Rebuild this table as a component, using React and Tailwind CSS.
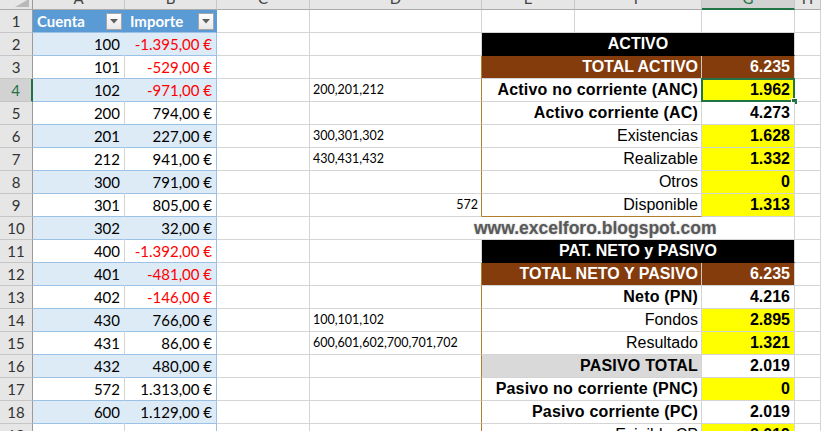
import React from 'react';

const calibri = "font-['Lato','Carlito','Liberation_Sans',sans-serif]";

const tableRows = [
  ['100', '-1.395,00 €', true],
  ['101', '-529,00 €', true],
  ['102', '-971,00 €', true],
  ['200', '794,00 €'],
  ['201', '227,00 €'],
  ['212', '941,00 €'],
  ['300', '791,00 €'],
  ['301', '805,00 €'],
  ['302', '32,00 €'],
  ['400', '-1.392,00 €', true],
  ['401', '-481,00 €', true],
  ['402', '-146,00 €', true],
  ['430', '766,00 €'],
  ['431', '86,00 €'],
  ['432', '480,00 €'],
  ['572', '1.313,00 €'],
  ['600', '1.129,00 €'],
  ['', ''],
];

const notes = {
  4: '200,201,212',
  6: '300,301,302',
  7: '430,431,432',
  14: '100,101,102',
  15: '600,601,602,700,701,702',
};

// bloque del balance (columnas E:G)
const balance = {
  2: { title: 'ACTIVO' },
  3: { total: true, label: 'TOTAL ACTIVO', value: '6.235' },
  4: { label: 'Activo no corriente (ANC)', bold: true, value: '1.962', yellow: true, selected: true },
  5: { label: 'Activo corriente (AC)', bold: true, value: '4.273' },
  6: { label: 'Existencias', value: '1.628', yellow: true },
  7: { label: 'Realizable', value: '1.332', yellow: true },
  8: { label: 'Otros', value: '0', yellow: true },
  9: { label: 'Disponible', value: '1.313', yellow: true, last: true },
  11: { title: 'PAT. NETO y PASIVO' },
  12: { total: true, label: 'TOTAL NETO Y PASIVO', value: '6.235' },
  13: { label: 'Neto (PN)', bold: true, value: '4.216' },
  14: { label: 'Fondos', value: '2.895', yellow: true },
  15: { label: 'Resultado', value: '1.321', yellow: true },
  16: { label: 'PASIVO TOTAL', bold: true, gray: true, value: '2.019' },
  17: { label: 'Pasivo no corriente (PNC)', bold: true, value: '0', yellow: true },
  18: { label: 'Pasivo corriente (PC)', bold: true, value: '2.019' },
  19: { label: 'Exigible CP', value: '2.019', yellow: true },
};

const FilterButton = () => (
  <span className="ml-auto mr-[2px] flex h-[17px] w-[16px] items-center justify-center border border-[#a6a6a6] bg-gradient-to-b from-white to-[#e9e9e9]">
    <svg width="8" height="5" viewBox="0 0 8 5">
      <path d="M0 0 L8 0 L4 4.5 Z" fill="#5f5f5f" />
    </svg>
  </span>
);

const ColHeader = ({ letter, selected }) => (
  <div
    className={`h-[10px] overflow-hidden border-r border-[#c6c6c6] ${
      selected ? 'border-b-2 border-b-[#217346] bg-[#d2d2d2] text-[#217346]' : 'border-b border-b-[#ababab] bg-[#e6e6e6] text-[#444]'
    }`}
  >
    <div className={`-mt-[11px] text-center text-[15px] leading-[18px] ${calibri}`}>{letter}</div>
  </div>
);

const RowHeader = ({ n }) => {
  const sel = n === 4;
  return (
    <div
      className={`flex items-center justify-center border-b border-b-[#c6c6c6] text-[15px] ${calibri} ${
        sel ? 'border-r-2 border-r-[#217346] bg-[#d2d2d2] text-[#217346]' : 'border-r border-r-[#9b9b9b] bg-[#e6e6e6] text-[#333]'
      }`}
    >
      {n}
    </div>
  );
};

const BalanceCells = ({ row }) => {
  const b = balance[row];
  if (!b) {
    return (
      <>
        <div className="border-r border-b border-[#d4d4d4]" />
        <div className="border-r border-b border-[#d4d4d4]" />
        <div className="border-r border-b border-[#d4d4d4]" />
      </>
    );
  }
  if (b.title) {
    return (
      <div className="col-span-3 flex items-center justify-center border-r border-b border-r-[#d4d4d4] border-b-black bg-black text-[16px] font-bold text-white font-['Liberation_Sans',Arial,sans-serif]">
        {b.title}
      </div>
    );
  }
  const font = "font-['Liberation_Sans',Arial,sans-serif] text-[16px]";
  if (b.total) {
    return (
      <>
        <div className={`col-span-2 flex items-center justify-end border-r border-b border-r-[#c9c9c9] border-b-[#d4d4d4] bg-[#843c0c] pr-[3px] font-bold text-white ${font}`}>
          {b.label}
        </div>
        <div className={`flex items-center justify-end border-r border-b border-r-[#d4d4d4] border-b-[#d4d4d4] bg-[#843c0c] pr-[4px] font-bold text-white ${font}`}>
          {b.value}
        </div>
      </>
    );
  }
  return (
    <>
      <div
        className={`col-span-2 flex items-center justify-end border-r border-b border-r-[#d4d4d4] pr-[3px] text-black ${font} ${
          b.last ? 'border-b-[#b07d2b]' : 'border-b-[#d4d4d4]'
        } ${b.bold ? 'font-bold tracking-[0.2px]' : ''} ${b.gray ? 'bg-[#d9d9d9]' : 'bg-white'}`}
      >
        {b.label}
      </div>
      <div
        className={`relative flex items-center justify-end border-r border-b border-[#d4d4d4] pr-[4px] font-bold text-black ${font} ${
          b.yellow ? 'bg-[#ffff00]' : 'bg-white'
        }`}
      >
        {b.value}
        {b.selected && (
          <>
            <span className="pointer-events-none absolute -left-[1px] -top-[1px] h-[24px] w-[94px] border-2 border-[#217346]" />
            <span className="absolute -bottom-[4px] -right-[4px] h-[7px] w-[7px] border border-white bg-[#217346]" />
          </>
        )}
      </div>
    </>
  );
};

const inBlock = (r) => (r >= 3 && r <= 9) || (r >= 12 && r <= 19);

export default function App() {
  const rows = Array.from({ length: 19 }, (_, i) => i + 1);

  return (
    <div className="h-[431px] w-[821px] overflow-hidden bg-white">
      <div className="grid grid-cols-[33px_92px_92px_93px_172px_93px_127px_93px_1fr] grid-rows-[10px] auto-rows-[23px]">
        {/* esquina */}
        <div className="relative h-[10px] border-r border-b border-r-[#9b9b9b] border-b-[#ababab] bg-[#e6e6e6]">
          <svg className="absolute bottom-[2px] right-[3px]" width="14" height="8" viewBox="0 0 14 8">
            <path d="M14 0 L14 8 L0 8 Z" fill="#b9b9b9" />
          </svg>
        </div>
        {['A', 'B', 'C', 'D', 'E', 'F', 'G', 'H'].map((l) => (
          <ColHeader key={l} letter={l} selected={l === 'G'} />
        ))}

        {rows.map((r) => {
          const band = r % 2 === 0;
          const cells = [<RowHeader key="h" n={r} />];

          if (r === 1) {
            cells.push(
              <div key="a" className={`flex items-center border-r border-b border-r-[#5b9bd5] border-b-[#9bc2e6] bg-[#5b9bd5] pl-[4px] text-[15px] font-bold text-white ${calibri}`}>
                Cuenta
                <FilterButton />
              </div>,
              <div key="b" className={`flex items-center border-r border-b border-r-[#5b9bd5] border-b-[#9bc2e6] bg-[#5b9bd5] pl-[5px] text-[15px] font-bold text-white ${calibri}`}>
                Importe
                <FilterButton />
              </div>
            );
          } else {
            const [cta, imp, neg] = tableRows[r - 2];
            cells.push(
              <div
                key="a"
                className={`flex items-center justify-end border-r border-b border-b-[#9bc2e6] pr-[4px] text-[15px] text-black ${calibri} ${
                  band ? 'border-r-[#ddebf7] bg-[#ddebf7]' : 'border-r-[#d4d4d4] bg-white'
                }`}
              >
                {cta}
              </div>,
              <div
                key="b"
                className={`flex items-center justify-end border-r border-b border-[#9bc2e6] pr-[4px] text-[15px] ${calibri} ${
                  band ? 'bg-[#ddebf7]' : 'bg-white'
                } ${neg ? 'text-[#ff0000]' : 'text-black'}`}
              >
                {imp}
              </div>
            );
          }

          cells.push(<div key="c" className="border-r border-b border-[#d4d4d4]" />);

          if (r === 10) {
            cells.push(
              <div key="web" className="col-span-4 flex items-center border-r border-b border-[#d4d4d4] bg-white pl-[164px]">
                <span className="text-[17.5px] font-bold text-[#595959] font-['Liberation_Sans',Arial,sans-serif] [text-shadow:0_0_2px_#b5b5b5]">
                  www.excelforo.blogspot.com
                </span>
              </div>
            );
          } else {
            cells.push(
              <div
                key="d"
                className={`flex items-center border-r border-b border-b-[#d4d4d4] px-[3px] text-[12.5px] text-black ${calibri} ${
                  inBlock(r) ? 'border-r-[#b07d2b]' : 'border-r-[#d4d4d4]'
                } ${r === 9 ? 'justify-end' : ''}`}
              >
                {r === 9 ? '572' : notes[r]}
              </div>
            );
            cells.push(<BalanceCells key="bal" row={r} />);
          }

          cells.push(<div key="hcol" className="border-r border-b border-[#d4d4d4]" />);
          return <React.Fragment key={r}>{cells}</React.Fragment>;
        })}
      </div>
    </div>
  );
}
